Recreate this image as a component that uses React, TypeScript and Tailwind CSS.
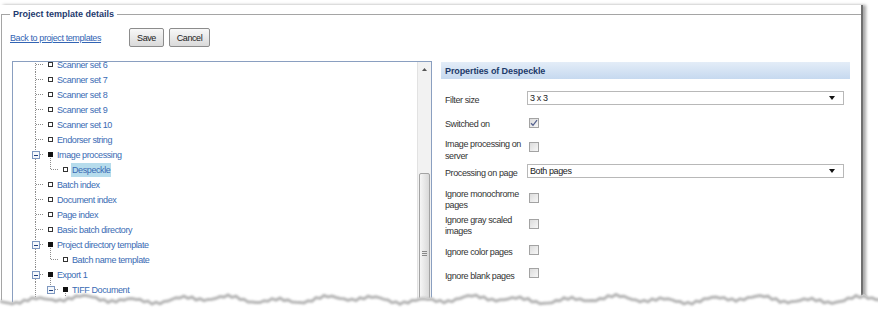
import React from 'react';

// Tree node kinds, drawn as small svg gutters in front of the label
type NodeKind = 'leaf0' | 'parent0' | 'leaf1last' | 'parent1';

interface TreeNode {
  label: string;
  kind: NodeKind;
  selected?: boolean;
}

const treeNodes: TreeNode[] = [
  { label: 'Scanner set 6', kind: 'leaf0' },
  { label: 'Scanner set 7', kind: 'leaf0' },
  { label: 'Scanner set 8', kind: 'leaf0' },
  { label: 'Scanner set 9', kind: 'leaf0' },
  { label: 'Scanner set 10', kind: 'leaf0' },
  { label: 'Endorser string', kind: 'leaf0' },
  { label: 'Image processing', kind: 'parent0' },
  { label: 'Despeckle', kind: 'leaf1last', selected: true },
  { label: 'Batch index', kind: 'leaf0' },
  { label: 'Document index', kind: 'leaf0' },
  { label: 'Page index', kind: 'leaf0' },
  { label: 'Basic batch directory', kind: 'leaf0' },
  { label: 'Project directory template', kind: 'parent0' },
  { label: 'Batch name template', kind: 'leaf1last' },
  { label: 'Export 1', kind: 'parent0' },
  { label: 'TIFF Document', kind: 'parent1' },
];

const dot = { stroke: '#8c8c8c', strokeWidth: 1, strokeDasharray: '1 1' };

const Hollow = ({ x }: { x: number }) => (
  <rect x={x + 0.5} y={5.5} width={4} height={4} fill="#fff" stroke="#333" />
);

const Filled = ({ x }: { x: number }) => <rect x={x} y={5} width={5} height={5} fill="#111" />;

const Toggle = ({ x }: { x: number }) => (
  <g>
    <rect x={x + 0.5} y={4.5} width={7} height={7} fill="#f4f7fb" stroke="#7d97bf" />
    <line x1={x + 2} y1={8} x2={x + 6} y2={8} stroke="#1f3f7f" />
  </g>
);

const TreeGutter = ({ kind }: { kind: NodeKind }) => {
  const width = kind === 'leaf0' || kind === 'parent0' ? 44 : 59;
  return (
    <svg width={width} height={15} className="shrink-0" shapeRendering="crispEdges">
      <line x1={22.5} y1={0} x2={22.5} y2={15} {...dot} />
      {kind === 'leaf0' && (
        <>
          <line x1={23} y1={7.5} x2={30} y2={7.5} {...dot} />
          <Hollow x={35} />
        </>
      )}
      {kind === 'parent0' && (
        <>
          <Toggle x={19} />
          <line x1={27} y1={7.5} x2={31} y2={7.5} {...dot} />
          <Filled x={35} />
          <line x1={37.5} y1={11} x2={37.5} y2={15} {...dot} />
        </>
      )}
      {kind === 'leaf1last' && (
        <>
          <line x1={37.5} y1={0} x2={37.5} y2={8} {...dot} />
          <line x1={38} y1={7.5} x2={46} y2={7.5} {...dot} />
          <Hollow x={50} />
        </>
      )}
      {kind === 'parent1' && (
        <>
          <line x1={37.5} y1={0} x2={37.5} y2={4} {...dot} />
          <Toggle x={34} />
          <line x1={42} y1={7.5} x2={46} y2={7.5} {...dot} />
          <Filled x={50} />
          <line x1={52.5} y1={11} x2={52.5} y2={15} {...dot} />
        </>
      )}
    </svg>
  );
};

const Checkbox = ({ checked = false }: { checked?: boolean }) => (
  <div className="w-[10px] h-[10px] border border-[#a3a3a3] bg-gradient-to-br from-[#dcdcdc] to-[#f7f7f7] flex items-center justify-center">
    {checked && (
      <svg width={8} height={8} viewBox="0 0 8 8">
        <path d="M1 4.2 L3 6.3 L7 1.2" fill="none" stroke="#56628f" strokeWidth={1.3} />
      </svg>
    )}
  </div>
);

const Select = ({ value }: { value: string }) => (
  <div className="w-[317px] h-[14px] border border-[#b8b8b8] bg-white flex items-center justify-between pl-[2px] pr-[8px]">
    <span className="text-[#222]">{value}</span>
    <svg width={6} height={4} viewBox="0 0 6 4">
      <path d="M0 0 H6 L3 4 Z" fill="#111" />
    </svg>
  </div>
);

// torn paper edge along the bottom of the screenshot
const tornPoints: string[] = [];
for (let x = 0; x <= 880; x += 4) {
  const y =
    298 +
    2.2 * Math.sin(x * 0.13) +
    1.8 * Math.sin(x * 0.047 + 1) +
    1.1 * Math.sin(x * 0.71 + 0.4);
  tornPoints.push(`${x},${y.toFixed(1)}`);
}
const tornLine = tornPoints.join(' ');

const App: React.FC = () => {
  return (
    <div
      className="relative w-[878px] h-[316px] overflow-hidden bg-white text-[9px] tracking-[-0.4px] leading-[12px]"
      style={{ fontFamily: '"Liberation Sans", Arial, sans-serif' }}
    >
      {/* captured window */}
      <div className="mt-[5px] pt-[9px] w-[863px] h-[320px] border-r-2 border-[#6f6f6f] shadow-[3px_0_3px_rgba(0,0,0,0.35)] bg-white">
        {/* fieldset */}
        <div className="relative ml-px h-[310px] border-l border-t border-[#a5a5a5]">
          <div className="absolute -top-[7px] left-[8px] bg-white px-[3px] font-bold text-[#1e3a6e] tracking-[0px]">
            Project template details
          </div>

          <div className="flex items-center mt-[13px] pl-[8px]">
            <a className="w-[119px] text-[#3264b4] underline cursor-pointer">Back to project templates</a>
            <button className="w-[35px] h-[19px] border border-[#8c8c8c] rounded-[2px] bg-gradient-to-b from-[#f8f8f8] to-[#dadada] text-[#222]">
              Save
            </button>
            <button className="ml-[5px] w-[41px] h-[19px] border border-[#8c8c8c] rounded-[2px] bg-gradient-to-b from-[#f8f8f8] to-[#dadada] text-[#222]">
              Cancel
            </button>
          </div>

          <div className="flex mt-[14px] ml-[10px]">
            {/* tree */}
            <div className="w-[420px] h-[250px] border border-[#8a9fc0] flex overflow-hidden">
              <div className="flex-1 overflow-hidden">
                <div className="-mt-[5px]">
                  {treeNodes.map((n) => (
                    <div key={n.label} className="flex items-center h-[15px]">
                      <TreeGutter kind={n.kind} />
                      <span
                        className={`h-[14px] flex items-center text-[#3a6bb4] whitespace-nowrap ${
                          n.selected ? 'bg-[#b6dcec] -ml-px px-px' : ''
                        }`}
                      >
                        {n.label}
                      </span>
                    </div>
                  ))}
                </div>
              </div>
              {/* scrollbar */}
              <div className="w-[14px] bg-[#f2f2f2] border-l border-[#e2e2e2] flex flex-col">
                <div className="h-[14px] flex items-center justify-center">
                  <svg width={5} height={3} viewBox="0 0 5 3">
                    <path d="M0 3 L2.5 0 L5 3 Z" fill="#555" />
                  </svg>
                </div>
                <div className="mt-[97px] ml-px w-[11px] flex-1 border border-[#a3a3a3] rounded-[2px] bg-gradient-to-r from-[#f6f6f6] to-[#d9d9d9] flex flex-col items-center">
                  <div className="mt-[77px] flex flex-col gap-px">
                    <div className="w-[5px] h-px bg-[#888]" />
                    <div className="w-[5px] h-px bg-[#888]" />
                    <div className="w-[5px] h-px bg-[#888]" />
                  </div>
                </div>
              </div>
            </div>

            {/* properties */}
            <div className="w-[418px] pl-[9px] pt-[1px]">
              <div className="h-[17px] bg-gradient-to-b from-[#e4edf8] to-[#c6d9ef] flex items-center pl-[4px] font-bold text-[#1d3a6a] tracking-[-0.1px]">
                Properties of Despeckle
              </div>

              <div className="pl-[4px] text-[#333]">
                <div className="flex mt-[12px] h-[14px]">
                  <div className="w-[82px] pt-[3px]">Filter size</div>
                  <Select value="3 x 3" />
                </div>
                <div className="flex mt-[12px]">
                  <div className="w-[82px] pt-px">Switched on</div>
                  <div className="ml-[2px] mt-px">
                    <Checkbox checked />
                  </div>
                </div>
                <div className="flex mt-[8px]">
                  <div className="w-[82px]">Image processing on server</div>
                  <div className="ml-[2px] mt-[4px]">
                    <Checkbox />
                  </div>
                </div>
                <div className="flex mt-[2px] h-[14px]">
                  <div className="w-[82px] pt-[3px]">Processing on page</div>
                  <Select value="Both pages" />
                </div>
                <div className="flex mt-[11px] leading-[11px]">
                  <div className="w-[82px]">Ignore monochrome pages</div>
                  <div className="ml-[2px] mt-[4px]">
                    <Checkbox />
                  </div>
                </div>
                <div className="flex mt-[4px] leading-[11px]">
                  <div className="w-[82px]">Ignore gray scaled images</div>
                  <div className="ml-[2px] mt-[4px]">
                    <Checkbox />
                  </div>
                </div>
                <div className="flex mt-[8px]">
                  <div className="w-[82px] pt-px">Ignore color pages</div>
                  <div className="ml-[2px]">
                    <Checkbox />
                  </div>
                </div>
                <div className="flex mt-[10px]">
                  <div className="w-[82px] pt-[2px]">Ignore blank pages</div>
                  <div className="ml-[2px]">
                    <Checkbox />
                  </div>
                </div>
              </div>
            </div>
          </div>
        </div>
      </div>

      {/* torn edge overlay */}
      <svg className="absolute left-0 top-0" width={878} height={316}>
        <defs>
          <filter id="tearBlur" x="-5%" y="-50%" width="110%" height="200%">
            <feGaussianBlur stdDeviation="1.2" />
          </filter>
        </defs>
        <polygon points={`0,316 ${tornLine} 880,316`} fill="#fff" />
        <polyline
          points={tornLine}
          transform="translate(0,1.5)"
          fill="none"
          stroke="#b5b5b5"
          strokeWidth={3}
          filter="url(#tearBlur)"
        />
      </svg>
    </div>
  );
};

export default App;
